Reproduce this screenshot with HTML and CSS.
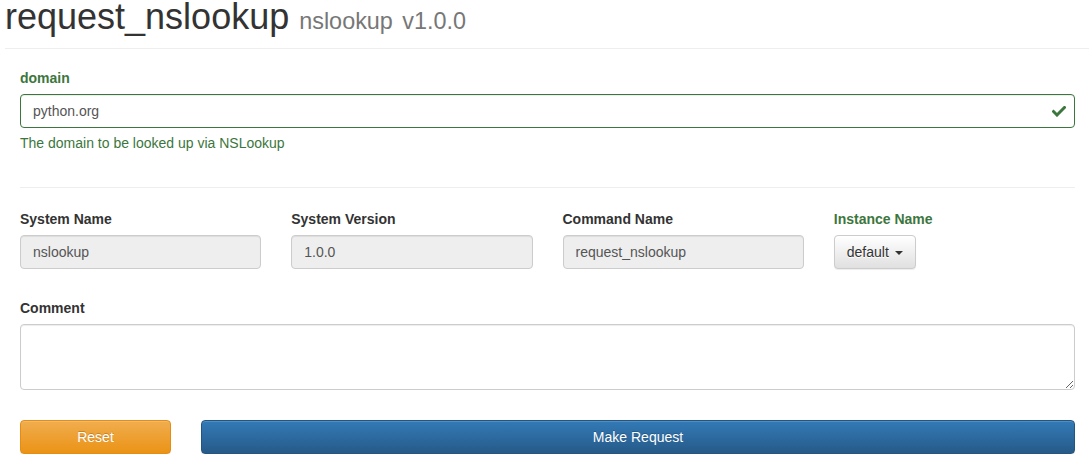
FILE: index.html
```html
<!DOCTYPE html>
<html>
<head>
<meta charset="utf-8">
<title>request_nslookup</title>
<link rel="stylesheet" href="styles.css">
</head>
<body>
<div class="page">
  <div class="page-header">
    <h1>request_nslookup <small>nslookup <span class="ver">v1.0.0</span></small></h1>
  </div>
  <form class="form">
    <div class="field has-success">
      <label class="label" for="domain">domain</label>
      <div class="input-wrap">
        <input class="control" id="domain" type="text" value="python.org">
        <svg class="ok-icon" width="14" height="11" viewBox="0 0 14 11" aria-hidden="true">
          <path d="M1.5 5.5 L5 9 L12.5 1.5" fill="none" stroke="#3c763d" stroke-width="3" stroke-linecap="square"/>
        </svg>
      </div>
      <p class="help">The domain to be looked up via NSLookup</p>
    </div>

    <hr class="divider">

    <div class="meta-row">
      <div class="field">
        <label class="label">System Name</label>
        <input class="control" type="text" value="nslookup" disabled>
      </div>
      <div class="field">
        <label class="label">System Version</label>
        <input class="control" type="text" value="1.0.0" disabled>
      </div>
      <div class="field">
        <label class="label">Command Name</label>
        <input class="control" type="text" value="request_nslookup" disabled>
      </div>
      <div class="field">
        <label class="label label-success">Instance Name</label>
        <div>
          <button type="button" class="btn btn-default">default <span class="caret"></span></button>
        </div>
      </div>
    </div>

    <div class="field comment-field">
      <label class="label">Comment</label>
      <textarea class="control textarea"></textarea>
    </div>

    <div class="actions">
      <button type="button" class="btn btn-warning">Reset</button>
      <button type="button" class="btn btn-primary">Make Request</button>
    </div>
  </form>
</div>
</body>
</html>
```

FILE: styles.css
```css
* {
  box-sizing: border-box;
}

html, body {
  margin: 0;
  padding: 0;
  background: #fff;
}

body {
  font-family: "Liberation Sans", Arial, Helvetica, sans-serif;
  font-size: 14px;
  line-height: 20px;
  color: #333;
  overflow: hidden;
}

.page {
  padding-left: 5px;
}

.page-header {
  border-bottom: 1px solid #eee;
  padding-bottom: 14px;
  margin-bottom: 19px;
}

.page-header h1 {
  margin: 0;
  font-size: 36px;
  line-height: 34px;
  height: 34px;
  font-weight: 500;
  color: #333;
}

.page-header small {
  font-size: 65%;
  line-height: 1;
  font-weight: 400;
  color: #777;
}

.page-header .ver {
  margin-left: 3px;
}

.form {
  padding-left: 15px;
  padding-right: 14px;
}

.field {
  display: flex;
  flex-direction: column;
}

.label {
  display: block;
  font-weight: 700;
  margin-bottom: 6px;
  color: #333;
}

.has-success .label,
.label-success {
  color: #3c763d;
}

.control {
  display: block;
  width: 100%;
  height: 34px;
  padding: 6px 12px;
  font-family: inherit;
  font-size: 14px;
  line-height: 20px;
  color: #555;
  background: #fff;
  border: 1px solid #ccc;
  border-radius: 4px;
  box-shadow: inset 0 1px 1px rgba(0, 0, 0, .075);
  outline: none;
}

.control:disabled {
  background: #eee;
  color: #555;
  opacity: 1;
  -webkit-text-fill-color: #555;
}

.has-success .control {
  border-color: #3c763d;
}

.input-wrap {
  position: relative;
}

.ok-icon {
  position: absolute;
  right: 9px;
  top: 12px;
}

.help {
  margin: 5px 0 0;
  color: #3c763d;
}

.divider {
  border: 0;
  border-top: 1px solid #eee;
  margin: 34px 0 0;
  height: 0;
}

.meta-row {
  margin-top: 21px;
  display: grid;
  grid-template-columns: repeat(4, 1fr);
  column-gap: 30px;
}

.comment-field {
  margin-top: 29px;
}

.textarea {
  height: 66px;
  resize: vertical;
}

.actions {
  margin-top: 30px;
  display: grid;
  grid-template-columns: 151px 1fr;
  column-gap: 30px;
}

.btn {
  display: inline-block;
  height: 34px;
  padding: 6px 12px;
  font-family: inherit;
  font-size: 14px;
  line-height: 20px;
  text-align: center;
  border: 1px solid transparent;
  border-radius: 4px;
  cursor: pointer;
}

.btn-default {
  color: #333;
  background-image: linear-gradient(to bottom, #fff 0, #e0e0e0 100%);
  border-color: #ccc;
  text-shadow: 0 1px 0 #fff;
  box-shadow: inset 0 1px 0 rgba(255, 255, 255, .15), 0 1px 1px rgba(0, 0, 0, .075);
}

.caret {
  display: inline-block;
  width: 0;
  height: 0;
  margin-left: 2px;
  vertical-align: middle;
  border-top: 4px solid #333;
  border-left: 4px solid transparent;
  border-right: 4px solid transparent;
}

.btn-warning {
  width: 100%;
  color: #fff;
  background-image: linear-gradient(to bottom, #f0ad4e 0, #eb9316 100%);
  border-color: #e38d13;
  text-shadow: 0 -1px 0 rgba(0, 0, 0, .2);
  box-shadow: inset 0 1px 0 rgba(255, 255, 255, .15), 0 1px 1px rgba(0, 0, 0, .075);
}

.btn-primary {
  width: 100%;
  color: #fff;
  background-image: linear-gradient(to bottom, #337ab7 0, #265a88 100%);
  border-color: #245580;
  text-shadow: 0 -1px 0 rgba(0, 0, 0, .2);
  box-shadow: inset 0 1px 0 rgba(255, 255, 255, .15), 0 1px 1px rgba(0, 0, 0, .075);
}
```
